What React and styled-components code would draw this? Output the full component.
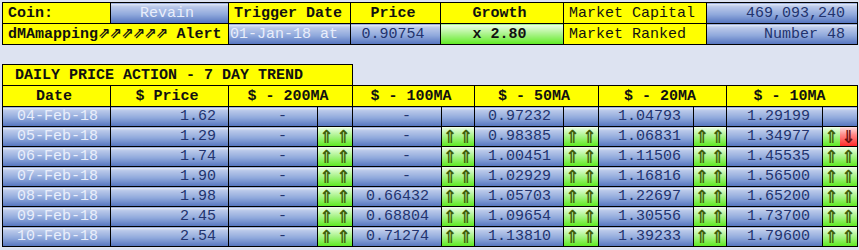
import React from "react";
import styled, { createGlobalStyle, css } from "styled-components";

const GlobalStyle = createGlobalStyle`
  body {
    margin: 0;
    padding: 2px;
    background: #dde3f1;
    font-family: "Liberation Mono", "DejaVu Sans Mono", monospace;
  }
`;

const blueFill = css`
  background: linear-gradient(to bottom, #eef2fb 0%, #bccaea 14%, #90a9dc 55%, #5373be 100%);
`;

const tones = {
  yellow: css`background: #ffff00; color: #111;`,
  blue: css`${blueFill} color: #22336e;`,
  pale: css`${blueFill} color: #e9eefb;`,
  green: css`background: linear-gradient(to bottom, #f0ffe8 0%, #b5f59a 40%, #5fea22 100%); color: #111;`,
  red: css`background: linear-gradient(to bottom, #ffe2e2 0%, #ff8a8a 40%, #ff2a2a 100%); color: #5a0a0a;`,
};

const Page = styled.div`
  display: flex;
  flex-direction: column;
  gap: 19px;
`;

const Table = styled.table`
  border-collapse: collapse;
  table-layout: fixed;
  width: ${(p) => p.width}px;
`;

const Cell = styled.td`
  ${(p) => tones[p.tone || "blue"]}
  border: 1px solid #000;
  height: ${(p) => p.h || 20}px;
  padding: 0 ${(p) => (p.align === "right" ? 12 : 5)}px 0 ${(p) => (p.align === "left" ? p.indent || 5 : 0)}px;
  text-align: ${(p) => p.align || "center"};
  font-size: 15px;
  line-height: 1;
  font-weight: ${(p) => (p.bold ? 700 : 400)};
  white-space: nowrap;
  overflow: hidden;
`;

const Surge = styled.span`
  font-family: "DejaVu Sans", sans-serif;
  font-size: 15px;
  font-weight: 700;
  letter-spacing: -1px;
`;

const ArrowCell = styled.td`
  ${(p) => (p.empty ? blueFill : "")}
  border: 1px solid #000;
  padding: 0;
  height: 19px;
`;

const ArrowPair = styled.div`
  display: flex;
  height: 19px;
`;

const Arrow = styled.span`
  ${(p) => tones[p.tone]}
  flex: 1;
  display: flex;
  align-items: center;
  justify-content: center;
  font-family: "DejaVu Sans", sans-serif;
  font-size: 18px;
  font-weight: 700;
  line-height: 19px;
  color: ${(p) => (p.tone === "red" ? "#6a1010" : "#41600a")};
`;

const topCols = [108, 118, 122, 90, 123, 143, 151];
const trendCols = [108, 118, 89, 35, 89, 33, 89, 35, 95, 33, 96, 35];

const rows = [
  ["04-Feb-18", "1.62", [["-", null], ["-", null], ["0.97232", null], ["1.04793", null], ["1.29199", null]]],
  ["05-Feb-18", "1.29", [["-", "uu"], ["-", "uu"], ["0.98385", "uu"], ["1.06831", "uu"], ["1.34977", "ud"]]],
  ["06-Feb-18", "1.74", [["-", "uu"], ["-", "uu"], ["1.00451", "uu"], ["1.11506", "uu"], ["1.45535", "uu"]]],
  ["07-Feb-18", "1.90", [["-", "uu"], ["-", "uu"], ["1.02929", "uu"], ["1.16816", "uu"], ["1.56500", "uu"]]],
  ["08-Feb-18", "1.98", [["-", "uu"], ["0.66432", "uu"], ["1.05703", "uu"], ["1.22697", "uu"], ["1.65200", "uu"]]],
  ["09-Feb-18", "2.45", [["-", "uu"], ["0.68804", "uu"], ["1.09654", "uu"], ["1.30556", "uu"], ["1.73700", "uu"]]],
  ["10-Feb-18", "2.54", [["-", "uu"], ["0.71274", "uu"], ["1.13810", "uu"], ["1.39233", "uu"], ["1.79600", "uu"]]],
];

const maHeads = ["$ - 200MA", "$ - 100MA", "$ - 50MA", "$ - 20MA", "$ - 10MA"];

function Arrows({ kind }) {
  if (!kind) return <ArrowCell empty />;
  return (
    <ArrowCell>
      <ArrowPair>
        <Arrow tone="green">⇑</Arrow>
        {kind === "ud" ? <Arrow tone="red">⇓</Arrow> : <Arrow tone="green">⇑</Arrow>}
      </ArrowPair>
    </ArrowCell>
  );
}

function Cols({ widths }) {
  return (
    <colgroup>
      {widths.map((w, i) => (
        <col key={i} style={{ width: w }} />
      ))}
    </colgroup>
  );
}

export default function App() {
  return (
    <>
      <GlobalStyle />
      <Page>
        <Table width={856}>
          <Cols widths={topCols} />
          <tbody>
            <tr>
              <Cell tone="yellow" align="left" bold>Coin:</Cell>
              <Cell tone="pale">Revain</Cell>
              <Cell tone="yellow" align="left" bold>Trigger Date</Cell>
              <Cell tone="yellow" bold>Price</Cell>
              <Cell tone="yellow" bold>Growth</Cell>
              <Cell tone="yellow" align="left">Market Capital</Cell>
              <Cell tone="blue" align="right">469,093,240</Cell>
            </tr>
            <tr>
              <Cell tone="yellow" align="left" bold colSpan={2}>
                dMAmapping<Surge>⇗⇗⇗⇗⇗⇗</Surge> Alert
              </Cell>
              <Cell tone="pale" align="right">01-Jan-18 at</Cell>
              <Cell tone="blue">0.90754</Cell>
              <Cell tone="green" bold>x 2.80</Cell>
              <Cell tone="yellow" align="left">Market Ranked</Cell>
              <Cell tone="blue" align="right">Number 48</Cell>
            </tr>
          </tbody>
        </Table>

        <Table width={856}>
          <Cols widths={trendCols} />
          <tbody>
            <tr>
              <Cell tone="yellow" align="left" indent={12} bold colSpan={4}>
                DAILY PRICE ACTION - 7 DAY TREND
              </Cell>
            </tr>
            <tr>
              <Cell tone="yellow" bold>Date</Cell>
              <Cell tone="yellow" bold>$ Price</Cell>
              {maHeads.map((h) => (
                <Cell key={h} tone="yellow" bold colSpan={2}>{h}</Cell>
              ))}
            </tr>
            {rows.map(([date, price, mas]) => (
              <tr key={date}>
                <Cell tone="pale" align="right" h={19}>{date}</Cell>
                <Cell tone="blue" align="right" h={19}>{price}</Cell>
                {mas.map(([v, k], i) => (
                  <React.Fragment key={i}>
                    <Cell tone="blue" align="right" h={19}>
                      {v === "-" ? "-\u00a0\u00a0" : v}
                    </Cell>
                    <Arrows kind={k} />
                  </React.Fragment>
                ))}
              </tr>
            ))}
          </tbody>
        </Table>
      </Page>
    </>
  );
}
